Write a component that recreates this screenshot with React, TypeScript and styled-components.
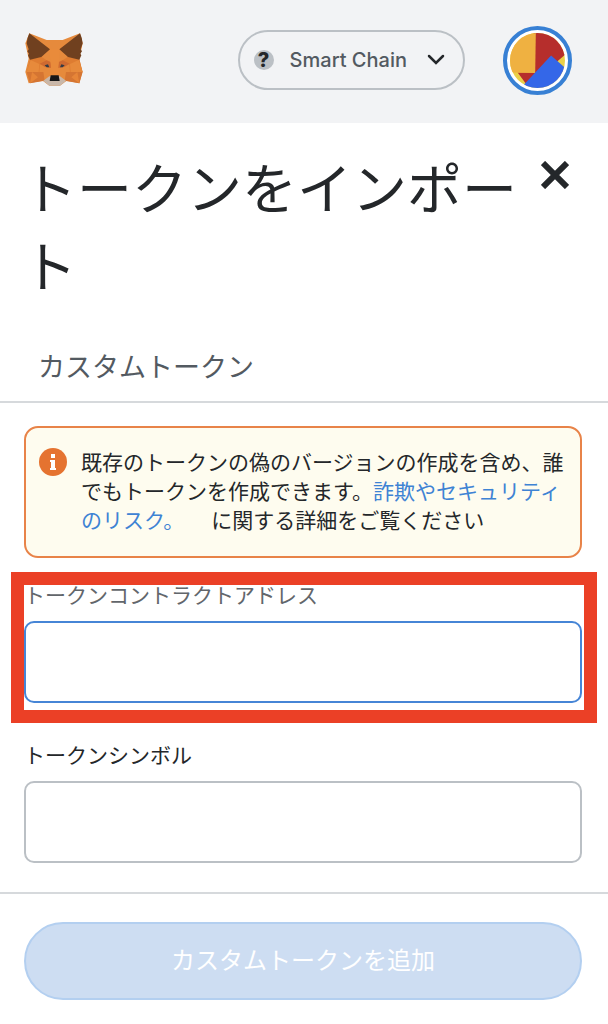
import React, { useState } from "react";
import styled, { createGlobalStyle } from "styled-components";

const GlobalStyle = createGlobalStyle`
  *, *::before, *::after { box-sizing: border-box; }
  body {
    margin: 0;
    background: #fff;
    color: #24272a;
    font-family: Inter, "Noto Sans CJK JP", sans-serif;
  }
  button, input { font: inherit; color: inherit; margin: 0; }
`;

const Header = styled.header`
  display: flex;
  align-items: center;
  height: 123px;
  padding: 0 36px 3px 24px;
  background: #f2f3f5;
`;

const LogoLink = styled.a`
  display: flex;
  margin-right: auto;
`;

const NetworkButton = styled.button`
  display: flex;
  align-items: center;
  height: 60px;
  padding: 0 18px 0 14px;
  border: 2px solid #bbc0c5;
  border-radius: 30px;
  background: transparent;
  color: #535a61;
  font-size: 20px;
  font-weight: 500;
  line-height: 28px;
  white-space: nowrap;
`;

const NetworkName = styled.span`
  margin: 0 20px 0 16px;
`;

const UnknownBadge = styled.span`
  display: grid;
  place-items: center;
  width: 20px;
  height: 20px;
  border-radius: 50%;
  background: #bbc0c5;
  color: #24272a;
  font-size: 20px;
  font-weight: 800;
  line-height: 20px;
`;

const AccountButton = styled.button`
  display: grid;
  place-items: center;
  width: 69px;
  height: 69px;
  margin-left: 38px;
  padding: 0;
  border: 4px solid #3880d4;
  border-radius: 50%;
  background: #fff;
`;

const TitleBar = styled.div`
  display: flex;
  align-items: flex-start;
  justify-content: space-between;
  padding: 27px 37px 0 22px;
`;

const Title = styled.h1`
  flex: 1;
  margin: 0;
  font-size: 55px;
  font-weight: 400;
  line-height: 78px;
  line-break: anywhere;
`;

const CloseButton = styled.button`
  display: flex;
  margin-top: 9px;
  padding: 2px;
  border: 0;
  background: transparent;
`;

const Tabs = styled.div`
  display: flex;
  padding: 28px 24px 0;
  border-bottom: 2px solid #d6d9dc;
`;

const Tab = styled.button`
  height: 67px;
  padding: 0 14px;
  border: 0;
  background: transparent;
  color: #535a61;
  font-size: 27px;
  line-height: 38px;
`;

const Form = styled.form`
  display: flex;
  flex-direction: column;
`;

const Fields = styled.div`
  display: flex;
  flex-direction: column;
  padding: 23px 26px 29px 24px;
`;

const Alert = styled.div`
  display: flex;
  align-items: flex-start;
  gap: 14px;
  margin-bottom: 23px;
  padding: 20px 0 21px 13px;
  border: 2px solid #e88348;
  border-radius: 14px;
  background: #fefcef;
`;

const AlertText = styled.p`
  flex: 1;
  margin: 0;
  font-size: 21px;
  line-height: 29px;
`;

const TextLink = styled.a`
  color: #3e83d4;
  text-decoration: none;
`;

const Field = styled.div<{ $highlighted?: boolean }>`
  position: relative;
  display: flex;
  flex-direction: column;
  gap: 11px;

  & + & { margin-top: 38px; }

  ${({ $highlighted }) =>
    $highlighted &&
    `
    &::after {
      content: "";
      position: absolute;
      inset: -9px -15px -20px -13px;
      border: 13px solid #eb4026;
      pointer-events: none;
    }
  `}
`;

const Label = styled.label<{ $muted?: boolean }>`
  font-size: 21px;
  line-height: 29px;
  color: ${({ $muted }) => ($muted ? "#62666b" : "#24272a")};
`;

const TextInput = styled.input<{ $active?: boolean }>`
  width: 100%;
  height: 82px;
  padding: 0 24px;
  border: 2px solid ${({ $active }) => ($active ? "#4685d6" : "#bbc0c5")};
  border-radius: 10px;
  background: #fff;
  font-size: 24px;
  outline: 0;
`;

const Footer = styled.footer`
  padding: 28px 26px 24px 24px;
  border-top: 2px solid #d6d9dc;
`;

const SubmitButton = styled.button`
  width: 100%;
  height: 78px;
  border: 2px solid #b3cff0;
  border-radius: 39px;
  background: #cdddf2;
  color: #fff;
  font-size: 24px;
  line-height: 34px;
`;

function FoxLogo() {
  return (
    <svg width="60" height="56" viewBox="28 26 180 168" aria-hidden="true">
      <path fill="#e68a3c" d="M44 30 96 50h48l52-20 8 30-10 46 9 40-9 34-38-8-20 15h-32l-20-15-42 8-10-34 10-40-10-46z" />
      <path fill="#de7c31" d="M46 108 80 100l18 12-22 12-2 24-38-2zM194 108l-34-8-18 12 22 12 2 24 38-2z" />
      <path fill="#e78a3b" d="M48 110 74 122l-2 24-36 0zM192 110l-26 12 2 24 36 0z" />
      <path fill="#d57532" d="M36 146h50l4 26-44 8zM204 146h-50l-4 26 44 8z" />
      <path fill="#e68538" d="M52 146 46 180l24-18zM188 146l6 34-24-18z" />
      <path fill="#cf6a30" d="M75 121 96 111l12 5 3 18-20-3zM165 121l-21-10-12 5-3 18 20-3z" />
      <path fill="#e98b3b" d="M104 78h32l-5 55 5 24h-32l5-24z" />
      <path fill="#70401f" d="M44 30 Q38 42 36 60L42 78 38 84 43 91 40 96 46 109 80 101 106 78zM196 30Q202 42 204 60L198 78 202 84 197 91 200 96 194 109 160 101 134 78z" />
      <path fill="#343b45" d="m90 126 10-3 4 9-8 0zM150 126l-10-3-4 9 8 0z" />
      <path fill="#c9b7a9" d="m86 172 18-13h32l18 13-18 15h-32z" />
      <path fill="#171718" d="m108 156h24l3 17h-30z" />
    </svg>
  );
}

function Jazzicon() {
  return (
    <svg width="55" height="55" viewBox="59 55 166 166" aria-hidden="true">
      <clipPath id="account-circle">
        <circle cx="142" cy="138" r="83" />
      </clipPath>
      <g clipPath="url(#account-circle)">
        <path fill="#ebd048" d="M59 55h166v166H59z" />
        <path fill="#b62e2c" d="M130 50h100v66l-60 52-64 39-24-33h48z" />
        <path fill="#efb141" d="M55 50h82l-2 126-80-2z" />
        <path fill="#3467e8" d="m183 123 50 44v60H86z" />
      </g>
    </svg>
  );
}

function ChevronDown() {
  return (
    <svg width="18" height="12" viewBox="0 0 18 12" aria-hidden="true">
      <path d="m2 2 7 7 7-7" fill="none" stroke="#24272a" strokeWidth="2.5" strokeLinecap="round" />
    </svg>
  );
}

function CloseIcon() {
  return (
    <svg width="28" height="28" viewBox="0 0 28 28" aria-hidden="true">
      <path d="m2 2 24 24M26 2 2 26" fill="none" stroke="#24272a" strokeWidth="6" />
    </svg>
  );
}

function InfoIcon() {
  return (
    <svg width="28" height="28" viewBox="0 0 28 28" aria-hidden="true">
      <circle cx="14" cy="14" r="14" fill="#e57330" />
      <path d="M12 6h4v4h-4zM11 12h5v8h1v2h-6v-2h1v-6h-1z" fill="#fff" />
    </svg>
  );
}

export default function App() {
  const [address, setAddress] = useState("");
  const [symbol, setSymbol] = useState("");

  return (
    <>
      <GlobalStyle />
      <Header>
        <LogoLink href="#" aria-label="MetaMask">
          <FoxLogo />
        </LogoLink>
        <NetworkButton type="button" aria-haspopup="listbox">
          <UnknownBadge>?</UnknownBadge>
          <NetworkName>Smart Chain</NetworkName>
          <ChevronDown />
        </NetworkButton>
        <AccountButton type="button" aria-label="アカウント">
          <Jazzicon />
        </AccountButton>
      </Header>
      <main lang="ja">
        <TitleBar>
          <Title>トークンをインポート</Title>
          <CloseButton type="button" aria-label="閉じる">
            <CloseIcon />
          </CloseButton>
        </TitleBar>
        <Tabs role="tablist">
          <Tab type="button" role="tab" aria-selected="true">
            カスタムトークン
          </Tab>
        </Tabs>
        <Form onSubmit={(event) => event.preventDefault()}>
          <Fields>
            <Alert>
              <InfoIcon />
              <AlertText>
                既存のトークンの偽のバージョンの作成を含め、誰でもトークンを作成できます。
                <TextLink href="#">詐欺やセキュリティのリスク。</TextLink>
                {" \u3000に関する詳細をご覧ください"}
              </AlertText>
            </Alert>
            <Field $highlighted>
              <Label htmlFor="token-address" $muted>
                トークンコントラクトアドレス
              </Label>
              <TextInput
                id="token-address"
                $active
                value={address}
                onChange={(event) => setAddress(event.target.value)}
              />
            </Field>
            <Field>
              <Label htmlFor="token-symbol">トークンシンボル</Label>
              <TextInput
                id="token-symbol"
                value={symbol}
                onChange={(event) => setSymbol(event.target.value)}
              />
            </Field>
          </Fields>
          <Footer>
            <SubmitButton type="submit" disabled>
              カスタムトークンを追加
            </SubmitButton>
          </Footer>
        </Form>
      </main>
    </>
  );
}
